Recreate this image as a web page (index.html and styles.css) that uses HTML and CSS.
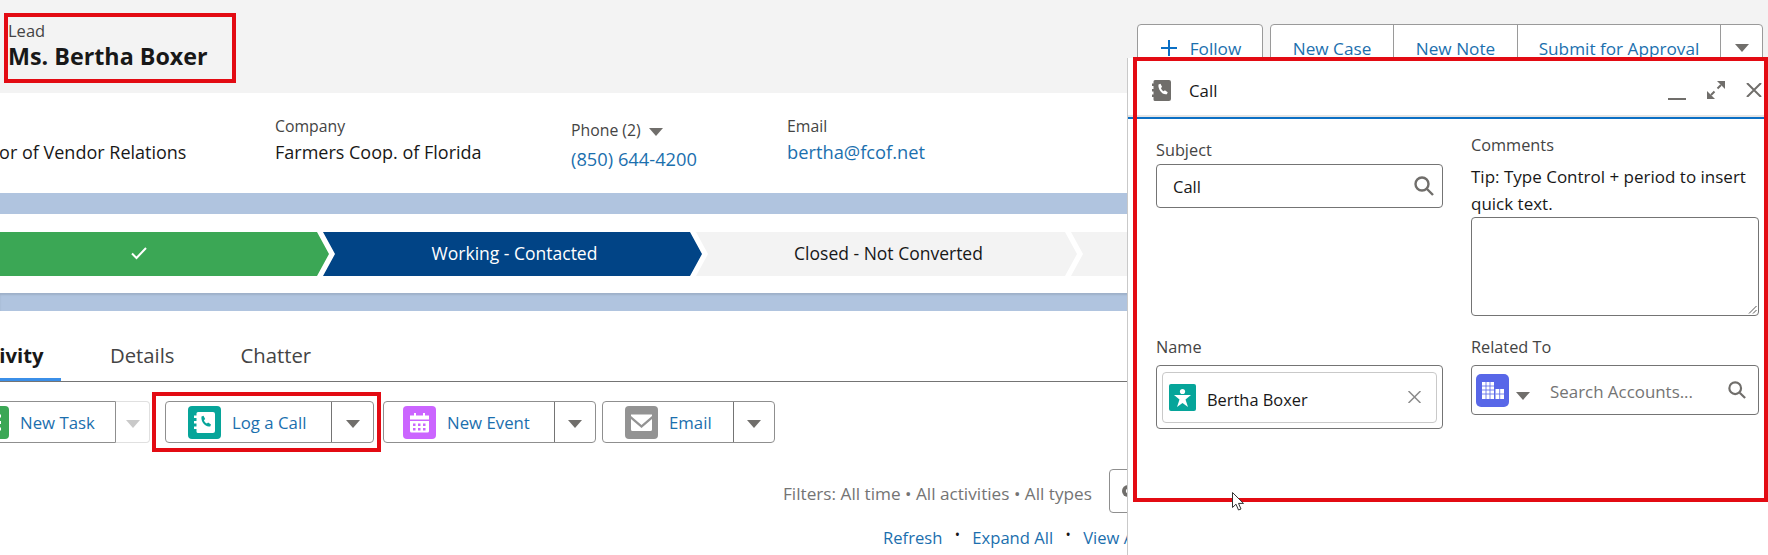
FILE: index.html
```html
<!DOCTYPE html>
<html lang="en">
<head>
<meta charset="utf-8">
<title>Lead: Ms. Bertha Boxer</title>
<link rel="stylesheet" href="styles.css">
</head>
<body>
<div class="page">
  <header class="head">
    <div class="title-block">
      <div class="obj">Lead</div>
      <h1 class="name">Ms. Bertha Boxer</h1>
    </div>
    <div class="actions">
      <div class="btn-group follow">
        <a class="act">
          <svg class="plus" viewBox="0 0 16 16"><path d="M8 0v16M0 8h16"/></svg>Follow
        </a>
      </div>
      <div class="btn-group">
        <a class="act act-case">New Case</a>
        <a class="act act-note">New Note</a>
        <a class="act act-submit">Submit for Approval</a>
        <a class="act act-more"><span class="tri"></span></a>
      </div>
    </div>
  </header>

  <section class="highlights">
    <div class="field f-title"><div class="label">&nbsp;</div><div class="value">Director of Vendor Relations</div></div>
    <div class="field f-company"><div class="label">Company</div><div class="value">Farmers Coop. of Florida</div></div>
    <div class="field f-phone"><div class="label">Phone (2) <span class="tri"></span></div><div class="value link">(850) 644-4200</div></div>
    <div class="field f-email"><div class="label">Email</div><div class="value link">bertha@fcof.net</div></div>
  </section>

  <div class="band"></div>

  <section class="path-wrap">
    <div class="path">
      <div class="step done"><svg class="check" viewBox="0 0 18 14"><path d="M2 7.500l4.500 4.500L16 2"/></svg></div>
      <div class="step current">Working - Contacted</div>
      <div class="step todo">Closed - Not Converted</div>
      <div class="step todo"></div>
    </div>
  </section>

  <div class="band band-2"></div>

  <nav class="tabs">
    <a class="tab active">Activity</a>
    <a class="tab">Details</a>
    <a class="tab">Chatter</a>
  </nav>

  <div class="publisher">
    <div class="pub pub-task">
      <a class="pub-main">
        <svg class="ico" viewBox="0 0 33 33"><rect width="33" height="33" rx="4" fill="#3ba755"/><path d="M8 10h17M8 16.500h17M8 23h17" stroke="#fff" stroke-width="3"/></svg>
        New Task
      </a>
      <a class="pub-more off"><span class="tri"></span></a>
    </div>
    <div class="pub pub-call">
      <a class="pub-main">
        <svg class="ico" viewBox="0 0 33 33"><use href="#book-teal"/></svg>
        Log a Call
      </a>
      <a class="pub-more"><span class="tri"></span></a>
    </div>
    <div class="pub pub-event">
      <a class="pub-main">
        <svg class="ico" viewBox="0 0 33 33"><rect width="33" height="33" rx="4" fill="#cb65ff"/><path fill="#fff" d="M7 9.500h4V7h2v2.500h7V7h2v2.500h4v4H7zM7 15h19v10a1.500 1.500 0 0 1-1.500 1.500h-16A1.500 1.500 0 0 1 7 25z"/><path fill="#cb65ff" d="M10 17.500h2.500V20H10zM15 17.500h2.500V20H15zM20 17.500h2.500V20H20zM10 22h2.500v2.500H10zM15 22h2.500v2.500H15zM20 22h2.500v2.500H20z"/></svg>
        New Event
      </a>
      <a class="pub-more"><span class="tri"></span></a>
    </div>
    <div class="pub pub-email">
      <a class="pub-main">
        <svg class="ico" viewBox="0 0 33 33"><rect width="33" height="33" rx="4" fill="#939393"/><path fill="#fff" d="M6 8.500h21v1.500L16.500 19 6 10zM6 13l10.500 9L27 13v10.500a1.500 1.500 0 0 1-1.500 1.500h-18A1.500 1.500 0 0 1 6 23.500z"/></svg>
        Email
      </a>
      <a class="pub-more"><span class="tri"></span></a>
    </div>
  </div>

  <div class="filters">
    <span class="filter-text">Filters: All time &bull; All activities &bull; All types</span>
    <button class="gear" type="button"><svg viewBox="0 0 16 16"><circle cx="8" cy="8" r="6" fill="#706e6b"/><circle cx="8" cy="8" r="2.200" fill="#fff"/></svg></button>
  </div>
  <div class="links">
    <a>Refresh</a><span class="dot">&bull;</span><a>Expand All</a><span class="dot">&bull;</span><a>View All</a>
  </div>

  <aside class="docked">
    <div class="dock-head">
      <svg class="dock-ico" viewBox="0 0 19 21"><path fill="#706e6b" d="M3 0h14a2 2 0 0 1 2 2v17a2 2 0 0 1-2 2H3a1.500 1.500 0 0 1-1.500-1.500V17H0v-2.500h1.500v-3H0V9h1.500V6H0V3.500h1.500V1.500A1.500 1.500 0 0 1 3 0z"/><path fill="#fff" d="M6.500 4.500l2-.8 1.600 3.300-1.200 1.100c.5 1.500 1.500 2.600 2.800 3.200l1.200-1.100 2.800 2-.8 2c-4.500 1.300-9.200-5-8.400-9.700z"/></svg>
      <span class="dock-title">Call</span>
      <div class="dock-tools">
        <svg class="tool-min" viewBox="0 0 18 18"><path d="M0 16h18"/></svg>
        <svg class="tool-exp" viewBox="0 0 18 18"><path d="M10 0h8v8zM0 18v-8l8 8z" class="solid"/><path d="M14 4l-3.500 3.500M4 14l3.500-3.500"/></svg>
        <svg class="tool-x" viewBox="0 0 16 14"><path d="M1 0l14 14M15 0L1 14"/></svg>
      </div>
    </div>
    <form class="dock-form">
      <div class="col col-left">
        <div class="fld fld-subject">
          <label class="lbl">Subject</label>
          <div class="input input-subject">
            <span>Call</span>
            <svg class="search" viewBox="0 0 20 20"><circle cx="8" cy="8" r="6.500"/><path d="M13 13l6 6"/></svg>
          </div>
        </div>
        <div class="fld fld-name">
          <label class="lbl">Name</label>
          <div class="input input-name">
            <div class="pill">
              <svg class="pill-ico" viewBox="0 0 27 27"><rect width="27" height="27" rx="2" fill="#06a59a"/><circle cx="13.500" cy="7.500" r="2.600" fill="#fff"/><path fill="#fff" d="M5 11h17l-5.500 4.500 2.500 7.500-5.500-4-5.500 4 2.500-7.500z"/></svg>
              <span class="pill-text">Bertha Boxer</span>
              <svg class="pill-x" viewBox="0 0 13 12"><path d="M.5 0l12 12M12.500 0L.5 12"/></svg>
            </div>
          </div>
        </div>
      </div>
      <div class="col col-right">
        <div class="fld fld-comments">
          <label class="lbl">Comments</label>
          <div class="tip">Tip: Type Control + period to insert quick text.</div>
          <div class="textarea"><svg class="grip" viewBox="0 0 9 9"><path d="M8.500 1L1 8.500M8.500 5L5 8.500"/></svg></div>
        </div>
        <div class="fld fld-related">
          <label class="lbl">Related To</label>
          <div class="input input-related">
            <svg class="rel-ico" viewBox="0 0 33 33"><rect width="33" height="33" rx="5" fill="#5867e8"/><path fill="#fff" d="M6 8h12v17H6zM19.500 15H28v10h-8.500z"/><path stroke="#5867e8" stroke-width=".8" d="M10 8v17M14 8v17M6 12h12M6 16h12M6 20h12M23.700 15v10M19.500 20H28"/></svg>
            <span class="tri rel-tri"></span>
            <span class="placeholder">Search Accounts...</span>
            <svg class="search search-sm" viewBox="0 0 20 20"><circle cx="8" cy="8" r="6.500"/><path d="M13 13l6 6"/></svg>
          </div>
        </div>
      </div>
    </form>
  </aside>

  <div class="mark mark-title"></div>
  <div class="mark mark-call"></div>
  <div class="mark mark-dock"></div>

  <svg class="cursor" viewBox="0 0 12 19"><path d="M.5.500v15l3.500-3.300 2.500 5.800 2.500-1-2.500-5.600h5z" fill="#fff" stroke="#333" stroke-width="1"/></svg>
</div>

<svg class="defs" aria-hidden="true">
  <symbol id="book-teal" viewBox="0 0 33 33">
    <rect width="33" height="33" rx="4" fill="#06a59a"/>
    <path fill="#fff" d="M10 6h15a2 2 0 0 1 2 2v17a2 2 0 0 1-2 2H10a1.500 1.500 0 0 1-1.500-1.500V23H6v-2.500h2.500v-3H6V15h2.500v-3H6V9.500h2.500v-2A1.500 1.500 0 0 1 10 6z"/>
    <path fill="#06a59a" d="M13.500 10.500l2-.8 1.700 3.400-1.300 1.100c.5 1.500 1.500 2.700 3 3.300l1.200-1.100 2.900 2-.8 2c-4.800 1.300-9.600-5-8.700-9.900z"/>
  </symbol>
</svg>
</body>
</html>
```
FILE: styles.css
```css
* { box-sizing: border-box; }
html, body { margin: 0; padding: 0; }
body {
  width: 1768px;
  height: 555px;
  overflow: hidden;
  background: #fff;
  color: #181818;
  font-family: "Open Sans", "Noto Sans", sans-serif;
  font-size: 16px;
}
a { color: #1b6fae; text-decoration: none; }
.defs { display: none; }
.page { position: relative; width: 1768px; height: 555px; overflow: hidden; }

.tri {
  display: inline-block;
  width: 0;
  height: 0;
  border-left: 7px solid transparent;
  border-right: 7px solid transparent;
  border-top: 8px solid #706e6b;
}

/* header */
.head {
  height: 93px;
  background: #f3f3f3;
  display: flex;
  justify-content: space-between;
  align-items: flex-start;
  overflow: hidden;
}
.title-block { padding: 21px 0 0 8px; }
.obj { font-size: 16.500px; line-height: 20px; color: #444; }
.name { margin: 0; font-size: 23.300px; line-height: 30px; font-weight: 700; color: #181818; }
.actions { display: flex; gap: 7px; padding: 24px 5px 0 0; }
.btn-group {
  display: flex;
  height: 48px;
  background: #fff;
  border: 1px solid #9a9a9a;
  border-radius: 4px;
}
.act {
  display: flex;
  align-items: center;
  justify-content: center;
  height: 46px;
  font-size: 17.200px;
  border-left: 1px solid #9a9a9a;
}
.act:first-child { border-left: 0; }
.follow .act { width: 124px; gap: 13px; padding-left: 2px; }
.plus { width: 16px; height: 16px; fill: none; stroke: #0b6fc4; stroke-width: 2; }
.act-case { width: 122px; }
.act-note { width: 124px; }
.act-submit { width: 203px; }
.act-more { width: 42px; }

/* highlights */
.highlights { height: 100px; display: flex; background: #fff; overflow: hidden; }
.field { padding-top: 23px; white-space: nowrap; }
.label { font-size: 15.800px; line-height: 20px; color: #444; }
.value { font-size: 18px; line-height: 24px; margin-top: 4px; color: #181818; }
.value.link { color: #1b6fae; font-size: 18.300px; }
.f-title { flex: 0 0 326px; margin-left: -51px; }
.f-company { flex: 0 0 296px; }
.f-phone { flex: 0 0 216px; padding-top: 27px; }
.f-phone .value { margin-top: 7px; }
.f-phone .tri { margin-left: 4px; }

/* bands */
.band { height: 21px; background: #b0c4df; }
.band-2 { height: 18px; box-shadow: inset 0 2px 2px rgba(0, 0, 0, .1); }

/* path */
.path-wrap { height: 79px; padding-top: 18px; background: #fff; }
.path { display: flex; height: 44px; margin-left: -51px; }
.step {
  flex: 0 0 auto;
  display: flex;
  align-items: center;
  justify-content: center;
  height: 44px;
  padding-bottom: 2px;
  font-size: 17.500px;
  clip-path: polygon(0 0, calc(100% - 12px) 0, 100% 50%, calc(100% - 12px) 100%, 0 100%, 12px 50%);
}
.done { width: 380px; background: #3ba755; }
.current { width: 379px; margin-left: -6px; padding-left: 4px; background: #014486; color: #fff; }
.todo { width: 381px; margin-left: -6px; padding-left: 4px; background: #f3f3f3; color: #181818; }
.check { width: 18px; height: 14px; fill: none; stroke: #fff; stroke-width: 2; }

/* tabs */
.tabs { display: flex; height: 71px; border-bottom: 1px solid #747474; margin-left: -40px; }
.tab { display: flex; align-items: center; font-size: 20.300px; color: #444; height: 70px; padding-top: 18px; }
.tab:nth-child(2) { margin-left: 49px; }
.tab:nth-child(3) { margin-left: 66px; }
.tab.active { color: #181818; font-weight: 700; width: 101px; padding-left: 6px; box-shadow: inset 0 -3px 0 #3b8fe8; }

/* publisher */
.publisher { display: flex; height: 42px; margin-top: 19px; margin-left: -40px; }
.pub { display: flex; height: 42px; border: 1px solid #8f8f8f; border-radius: 4px; }
.pub-main { display: flex; align-items: center; gap: 11px; flex: none; font-size: 16.800px; padding-left: 22px; white-space: nowrap; }
.pub-more { display: flex; align-items: center; justify-content: center; border-left: 1px solid #747474; padding-top: 3px; flex: 1; }
.ico { width: 33px; height: 33px; flex: none; }
.pub-task { width: 190px; margin-right: 15px; border: 0; }
.pub-task .pub-main { width: 156px; padding-left: 15px; border: 1px solid #8f8f8f; border-radius: 4px 0 0 4px; }
.pub-task .pub-more { border: 1px solid #e0e0e0; border-left: 0; border-radius: 0 4px 4px 0; }
.pub-task .tri { border-top-color: #c9c9c9; }
.pub-call { width: 209px; margin-right: 9px; }
.pub-call .pub-main { width: 165px; }
.pub-event { width: 213px; margin-right: 6px; }
.pub-event .pub-main { width: 170px; padding-left: 19px; }
.pub-email { width: 173px; }
.pub-email .pub-main { width: 130px; }

/* filters */
.filters { display: flex; align-items: center; height: 44px; margin-top: 26px; padding-left: 783px; color: #747474; font-size: 17.200px; white-space: nowrap; }
.filter-text { margin-top: 4px; }
.gear { width: 60px; height: 44px; flex: none; margin-left: 17px; padding: 0 0 0 10px; border: 1px solid #8f8f8f; border-radius: 4px; background: #fff; text-align: left; }
.gear svg { width: 16px; height: 16px; display: block; }
.links { display: flex; align-items: center; height: 24px; margin-top: 12px; padding-left: 883px; font-size: 16.600px; white-space: nowrap; }
.dot { width: 30px; text-align: center; color: #181818; font-size: 14px; margin-top: -6px; }

/* docked panel */
.docked {
  position: absolute;
  left: 1127px;
  top: 58px;
  width: 641px;
  height: 497px;
  background: #fff;
  border-left: 1px solid #c9c9c9;
}
.dock-head {
  display: flex;
  align-items: center;
  height: 61px;
  padding: 5px 0 0 24px;
  border-bottom: 2px solid #0b6fc4;
  box-shadow: inset 0 -2px 0 #e5e5e5;
}
.dock-ico { width: 19px; height: 21px; flex: none; }
.dock-title { margin-left: 18px; font-size: 16.800px; color: #181818; }
.dock-tools { margin-left: auto; display: flex; align-items: center; gap: 21px; padding-right: 6px; }
.dock-tools svg { display: block; fill: none; stroke: #706e6b; stroke-width: 2; }
.tool-min { width: 18px; height: 18px; margin-top: 4px; }
.tool-exp { width: 18px; height: 18px; }
.tool-exp .solid { fill: #706e6b; stroke: none; }
.tool-x { width: 16px; height: 14px; }

.dock-form { display: flex; padding: 0 0 0 28px; }
.col-left { width: 287px; flex: none; }
.col-right { width: 288px; flex: none; margin-left: 28px; }
.lbl { display: block; font-size: 16.300px; line-height: 20px; color: #444; }
.fld-subject { padding-top: 21px; }
.fld-comments { padding-top: 16px; }
.input { margin-top: 4px; border: 1px solid #747474; border-radius: 4px; background: #fff; }
.input-subject { display: flex; align-items: center; justify-content: space-between; height: 44px; padding: 0 8px 0 16px; font-size: 16.500px; }
.search { width: 20px; height: 20px; fill: none; stroke: #706e6b; stroke-width: 2.400; }
.fld-name { margin-top: 129px; }
.input-name { height: 64px; padding: 6px 5px; margin-top: 8px; }
.pill { display: flex; align-items: center; height: 51px; padding: 0 15px 0 6px; border: 1px solid #c9c9c9; border-radius: 4px; }
.pill-ico { width: 27px; height: 27px; flex: none; }
.pill-text { margin-left: 11px; margin-top: 3px; font-size: 16.400px; color: #181818; }
.pill-x { width: 13px; height: 12px; margin-left: auto; margin-bottom: 2px; fill: none; stroke: #8a8a8a; stroke-width: 1.500; }
.tip { margin-top: 8px; font-size: 17px; line-height: 27px; color: #181818; }
.textarea { position: relative; height: 99px; border: 1px solid #747474; border-radius: 4px; }
.grip { position: absolute; right: 1px; bottom: 1px; width: 9px; height: 9px; fill: none; stroke: #555; stroke-width: 1; }
.fld-related { margin-top: 21px; }
.input-related { display: flex; align-items: center; height: 50px; margin-top: 8px; padding-left: 4px; }
.rel-ico { width: 33px; height: 33px; flex: none; }
.rel-tri { margin: 12px 0 0 7px; flex: none; }
.placeholder { margin-left: 20px; margin-top: 3px; font-size: 16.900px; color: #747474; white-space: nowrap; }
.search-sm { width: 18px; height: 18px; margin-left: auto; margin-right: 12px; flex: none; }

/* annotation overlays */
.mark { position: absolute; border: 4px solid #e30b13; pointer-events: none; }
.mark-title { left: 4px; top: 13px; width: 232px; height: 70px; }
.mark-call { left: 152px; top: 392px; width: 229px; height: 60px; }
.mark-dock { left: 1133px; top: 57px; width: 635px; height: 445px; }
.cursor { position: absolute; left: 1232px; top: 492px; width: 12px; height: 19px; }
```
